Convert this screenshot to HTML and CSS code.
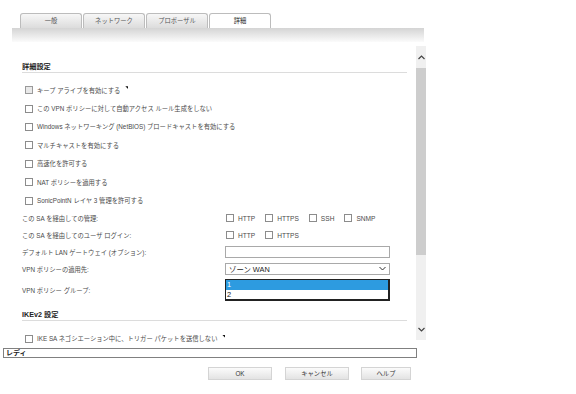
FILE: index.html
```html
<!DOCTYPE html>
<html>
  <head>
    <meta charset="utf-8">
    <title>VPN ポリシー - 詳細</title>
    <link rel="stylesheet" href="styles.css">
  </head>
  <body>
    <div class="tabs">
      <div class="tab">一般</div>
      <div class="tab">ネットワーク</div>
      <div class="tab">プロポーザル</div>
      <div class="tab active">詳細</div>
    </div>
    <div class="band"></div>

    <div class="frame">
      <div class="content">
        <div class="section-title">詳細設定</div>
        <div class="check-list">
          <div class="check-row"><span class="box focus"></span>キープ アライブを有効にする<span class="tip"></span></div>
          <div class="check-row"><span class="box"></span>この VPN ポリシーに対して自動アクセス ルール生成をしない</div>
          <div class="check-row"><span class="box"></span>Windows ネットワーキング (NetBIOS) ブロードキャストを有効にする</div>
          <div class="check-row"><span class="box"></span>マルチキャストを有効にする</div>
          <div class="check-row"><span class="box"></span>高速化を許可する</div>
          <div class="check-row"><span class="box"></span>NAT ポリシーを適用する</div>
          <div class="check-row"><span class="box"></span>SonicPointN レイヤ 3 管理を許可する</div>
        </div>

        <div class="form-row">
          <div class="label">この SA を経由しての管理:</div>
          <div class="opts">
            <span class="opt"><span class="box"></span>HTTP</span>
            <span class="opt"><span class="box"></span>HTTPS</span>
            <span class="opt"><span class="box"></span>SSH</span>
            <span class="opt"><span class="box"></span>SNMP</span>
          </div>
        </div>
        <div class="form-row">
          <div class="label">この SA を経由してのユーザ ログイン:</div>
          <div class="opts">
            <span class="opt"><span class="box"></span>HTTP</span>
            <span class="opt"><span class="box"></span>HTTPS</span>
          </div>
        </div>
        <div class="form-row">
          <div class="label">デフォルト LAN ゲートウェイ (オプション):</div>
          <div class="text-input"></div>
        </div>
        <div class="form-row">
          <div class="label">VPN ポリシーの適用先:</div>
          <div class="select">
            <span>ゾーン WAN</span>
            <svg class="chev" width="7" height="5" viewBox="0 0 7 5"><polyline points="0.5,1 3.5,4 6.5,1" fill="none" stroke="#333" stroke-width="1"/></svg>
          </div>
        </div>
        <div class="form-row tall">
          <div class="label">VPN ポリシー グループ:</div>
          <div class="listbox">
            <div class="item selected">1</div>
            <div class="item">2</div>
          </div>
        </div>

        <div class="section-title second">IKEv2 設定</div>
        <div class="check-row ike"><span class="box"></span>IKE SA ネゴシエーション中に、トリガー パケットを送信しない<span class="tip"></span></div>
      </div>

      <div class="scrollbar">
        <div class="arrow">
          <svg width="7" height="5" viewBox="0 0 7 5"><polyline points="0.5,4 3.5,1 6.5,4" fill="none" stroke="#444" stroke-width="1.2"/></svg>
        </div>
        <div class="thumb"></div>
        <div class="track"></div>
        <div class="arrow">
          <svg width="7" height="5" viewBox="0 0 7 5"><polyline points="0.5,1 3.5,4 6.5,1" fill="none" stroke="#444" stroke-width="1.2"/></svg>
        </div>
      </div>
    </div>

    <div class="status">レディ</div>

    <div class="buttons">
      <div class="btn">OK</div>
      <div class="btn">キャンセル</div>
      <div class="btn small">ヘルプ</div>
    </div>
  </body>
</html>
```

FILE: styles.css
```css
body {
  margin: 0;
  width: 576px;
  height: 394px;
  background-color: #fff;
  font-family: "Liberation Sans", "Noto Sans CJK JP", sans-serif;
  font-size: 6.3px;
  color: #4a4a4a;
  overflow: hidden;
}
.tabs {
  display: flex;
  margin-top: 13px;
  padding-left: 20px;
  height: 15px;
}
.tab {
  width: 62px;
  height: 15px;
  box-sizing: border-box;
  border: 1px solid #bcbcbc;
  border-bottom: none;
  border-radius: 3px 3px 0 0;
  background: linear-gradient(#f7f7f7, #dcdcdc);
  text-align: center;
  line-height: 14px;
  color: #555;
  margin-right: 1px;
}
.tab.active {
  background: #fff;
  color: #222;
}
.band {
  margin-left: 12px;
  width: 412px;
  height: 14px;
  background: linear-gradient(#d4d4d4, #fbfbfb);
}
.frame {
  display: flex;
  margin-top: 4px;
  height: 300px;
}
.content {
  width: 385px;
  padding: 16px 9px 0 22px;
  overflow: hidden;
}
.section-title {
  font-size: 7.2px;
  font-weight: bold;
  color: #222;
  line-height: 9px;
  padding-bottom: 1px;
  border-bottom: 1px solid #dcdcdc;
}
.section-title.second {
  margin-top: 7px;
}
.check-list {
  margin-top: 8px;
}
.check-row {
  display: flex;
  align-items: center;
  height: 18.4px;
  padding-left: 3px;
}
.check-row.ike {
  margin-top: 9px;
}
.box {
  width: 8px;
  height: 8px;
  box-sizing: border-box;
  border: 1px solid #8c8c8c;
  background-color: #fff;
  margin-right: 4px;
  flex-shrink: 0;
}
.box.focus {
  background-color: #e9e9e9;
  border-color: #9a9a9a;
}
.tip {
  width: 3px;
  height: 3px;
  margin-left: 5px;
  margin-bottom: 5px;
  background-color: #111;
  clip-path: polygon(0 0, 100% 0, 100% 100%);
}
.form-row {
  display: flex;
  align-items: center;
  height: 17px;
}
.form-row.tall {
  height: 25px;
}
.label {
  width: 203px;
  flex-shrink: 0;
}
.opts {
  display: flex;
  align-items: center;
  padding-left: 1px;
  font-size: 6.6px;
}
.opt {
  display: flex;
  align-items: center;
  margin-right: 10px;
}
.text-input {
  width: 165px;
  height: 12px;
  box-sizing: border-box;
  border: 1px solid #a9a9a9;
}
.select {
  align-self: flex-start;
  margin-top: 2px;
  width: 165px;
  height: 12px;
  box-sizing: border-box;
  border: 1px solid #a9a9a9;
  display: flex;
  align-items: center;
  justify-content: space-between;
  padding: 0 3px;
  font-size: 7.4px;
  color: #222;
}
.listbox {
  width: 165px;
  height: 22px;
  box-sizing: border-box;
  border-style: solid;
  border-color: #222;
  border-width: 1px 2px 2px 1px;
  font-size: 7.4px;
  color: #111;
}
.item {
  height: 10px;
  line-height: 10px;
  padding-left: 1px;
}
.item.selected {
  background-color: #2d9be0;
  color: #fff;
}
.scrollbar {
  width: 10px;
  height: 294px;
  background-color: #f0f0f0;
  display: flex;
  flex-direction: column;
}
.arrow {
  height: 22px;
  display: flex;
  align-items: center;
  justify-content: center;
}
.thumb {
  height: 187px;
  background-color: #cdcdcd;
}
.track {
  flex: 1;
}
.status {
  margin: 2px 0 0 3px;
  width: 414px;
  height: 10px;
  box-sizing: border-box;
  border: 1px solid #808080;
  padding-left: 2px;
  line-height: 8px;
  font-size: 7px;
  font-weight: bold;
  color: #222;
}
.buttons {
  display: flex;
  margin-top: 9px;
  padding-left: 208px;
}
.btn {
  width: 64px;
  height: 13px;
  box-sizing: border-box;
  border: 1px solid #d4d4d4;
  background: linear-gradient(#fbfbfb, #e3e3e3);
  text-align: center;
  line-height: 11px;
  color: #333;
  margin-right: 13px;
}
.btn.small {
  width: 50px;
  margin-left: -1px;
}
```
